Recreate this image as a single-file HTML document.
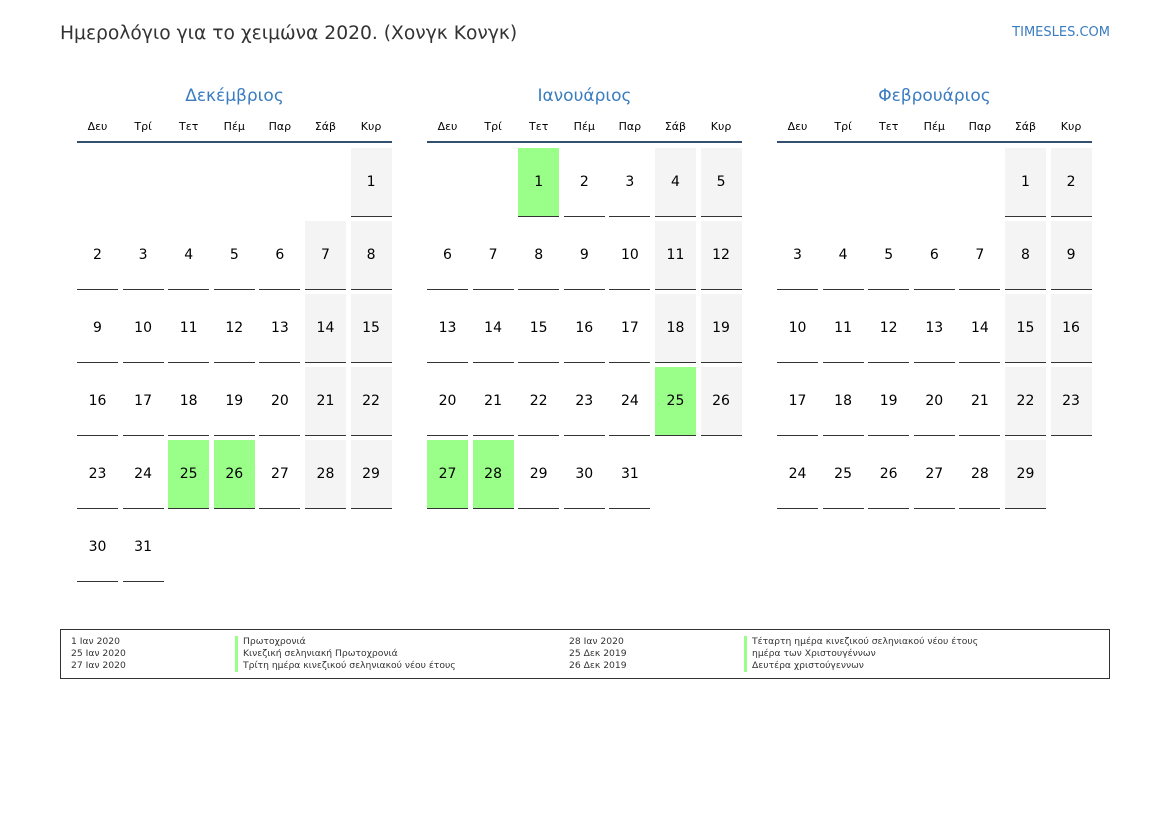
<!DOCTYPE html><html><head><meta charset="utf-8"><style>
body{margin:0;width:1169px;height:827px;background:#fff;font-family:"DejaVu Sans","Liberation Sans",sans-serif;position:relative;overflow:hidden;color:#000}
.t{position:absolute;left:60px;top:23px;font-size:18.7px;color:#333}
.s{position:absolute;right:59px;top:25px;font-size:13px;color:#3a7cc0}
.m{position:absolute;top:85px;width:315px}
.mt{text-align:center;font-size:17px;color:#3a7cc0;height:22px;line-height:22px}
.dn{display:grid;grid-template-columns:repeat(7,41px);column-gap:4.6px;font-size:11px;text-align:center;margin-top:9px;height:22px;line-height:22px;border-bottom:2px solid #34506f;padding-bottom:3px;width:315px}
.g{display:grid;grid-template-columns:repeat(7,41px);column-gap:4.6px;row-gap:4px;margin-top:5px}
.g div{height:68px;line-height:68px;text-align:center;font-size:14px}
.g .d{border-bottom:1px solid #333}
.g .w{background:#f4f4f4}
.g .h{background:#99ff88}
.lg{position:absolute;left:60px;top:629px;width:1048px;height:48px;border:1px solid #333;font-size:9.2px;color:#333;line-height:12px}
.lg>div{position:absolute;top:6px}
.b{border-left:3px solid #99ff88;padding-left:5px}
</style></head><body>
<div class="t">Ημερολόγιο για το χειμώνα 2020. (Χονγκ Κονγκ)</div>
<div class="s">TIMESLES.COM</div>

<div class="m" style="left:77px"><div class="mt">Δεκέμβριος</div>
<div class="dn"><span>Δευ</span><span>Τρί</span><span>Τετ</span><span>Πέμ</span><span>Παρ</span><span>Σάβ</span><span>Κυρ</span></div>
<div class="g">
<div></div><div></div><div></div><div></div><div></div><div></div><div class="d w">1</div>
<div class="d">2</div><div class="d">3</div><div class="d">4</div><div class="d">5</div><div class="d">6</div><div class="d w">7</div><div class="d w">8</div>
<div class="d">9</div><div class="d">10</div><div class="d">11</div><div class="d">12</div><div class="d">13</div><div class="d w">14</div><div class="d w">15</div>
<div class="d">16</div><div class="d">17</div><div class="d">18</div><div class="d">19</div><div class="d">20</div><div class="d w">21</div><div class="d w">22</div>
<div class="d">23</div><div class="d">24</div><div class="d h">25</div><div class="d h">26</div><div class="d">27</div><div class="d w">28</div><div class="d w">29</div>
<div class="d">30</div><div class="d">31</div>
</div></div>

<div class="m" style="left:427px"><div class="mt">Ιανουάριος</div>
<div class="dn"><span>Δευ</span><span>Τρί</span><span>Τετ</span><span>Πέμ</span><span>Παρ</span><span>Σάβ</span><span>Κυρ</span></div>
<div class="g">
<div></div><div></div><div class="d h">1</div><div class="d">2</div><div class="d">3</div><div class="d w">4</div><div class="d w">5</div>
<div class="d">6</div><div class="d">7</div><div class="d">8</div><div class="d">9</div><div class="d">10</div><div class="d w">11</div><div class="d w">12</div>
<div class="d">13</div><div class="d">14</div><div class="d">15</div><div class="d">16</div><div class="d">17</div><div class="d w">18</div><div class="d w">19</div>
<div class="d">20</div><div class="d">21</div><div class="d">22</div><div class="d">23</div><div class="d">24</div><div class="d h">25</div><div class="d w">26</div>
<div class="d h">27</div><div class="d h">28</div><div class="d">29</div><div class="d">30</div><div class="d">31</div>
</div></div>

<div class="m" style="left:777px"><div class="mt">Φεβρουάριος</div>
<div class="dn"><span>Δευ</span><span>Τρί</span><span>Τετ</span><span>Πέμ</span><span>Παρ</span><span>Σάβ</span><span>Κυρ</span></div>
<div class="g">
<div></div><div></div><div></div><div></div><div></div><div class="d w">1</div><div class="d w">2</div>
<div class="d">3</div><div class="d">4</div><div class="d">5</div><div class="d">6</div><div class="d">7</div><div class="d w">8</div><div class="d w">9</div>
<div class="d">10</div><div class="d">11</div><div class="d">12</div><div class="d">13</div><div class="d">14</div><div class="d w">15</div><div class="d w">16</div>
<div class="d">17</div><div class="d">18</div><div class="d">19</div><div class="d">20</div><div class="d">21</div><div class="d w">22</div><div class="d w">23</div>
<div class="d">24</div><div class="d">25</div><div class="d">26</div><div class="d">27</div><div class="d">28</div><div class="d w">29</div>
</div></div>

<div class="lg">
<div style="left:10px">1 Ιαν 2020<br>25 Ιαν 2020<br>27 Ιαν 2020</div>
<div style="left:174px"><div class="b">Πρωτοχρονιά</div><div class="b">Κινεζική σεληνιακή Πρωτοχρονιά</div><div class="b">Τρίτη ημέρα κινεζικού σεληνιακού νέου έτους</div></div>
<div style="left:508px">28 Ιαν 2020<br>25 Δεκ 2019<br>26 Δεκ 2019</div>
<div style="left:683px"><div class="b">Τέταρτη ημέρα κινεζικού σεληνιακού νέου έτους</div><div class="b">ημέρα των Χριστουγέννων</div><div class="b">Δευτέρα χριστούγεννων</div></div>
</div>
</body></html>
